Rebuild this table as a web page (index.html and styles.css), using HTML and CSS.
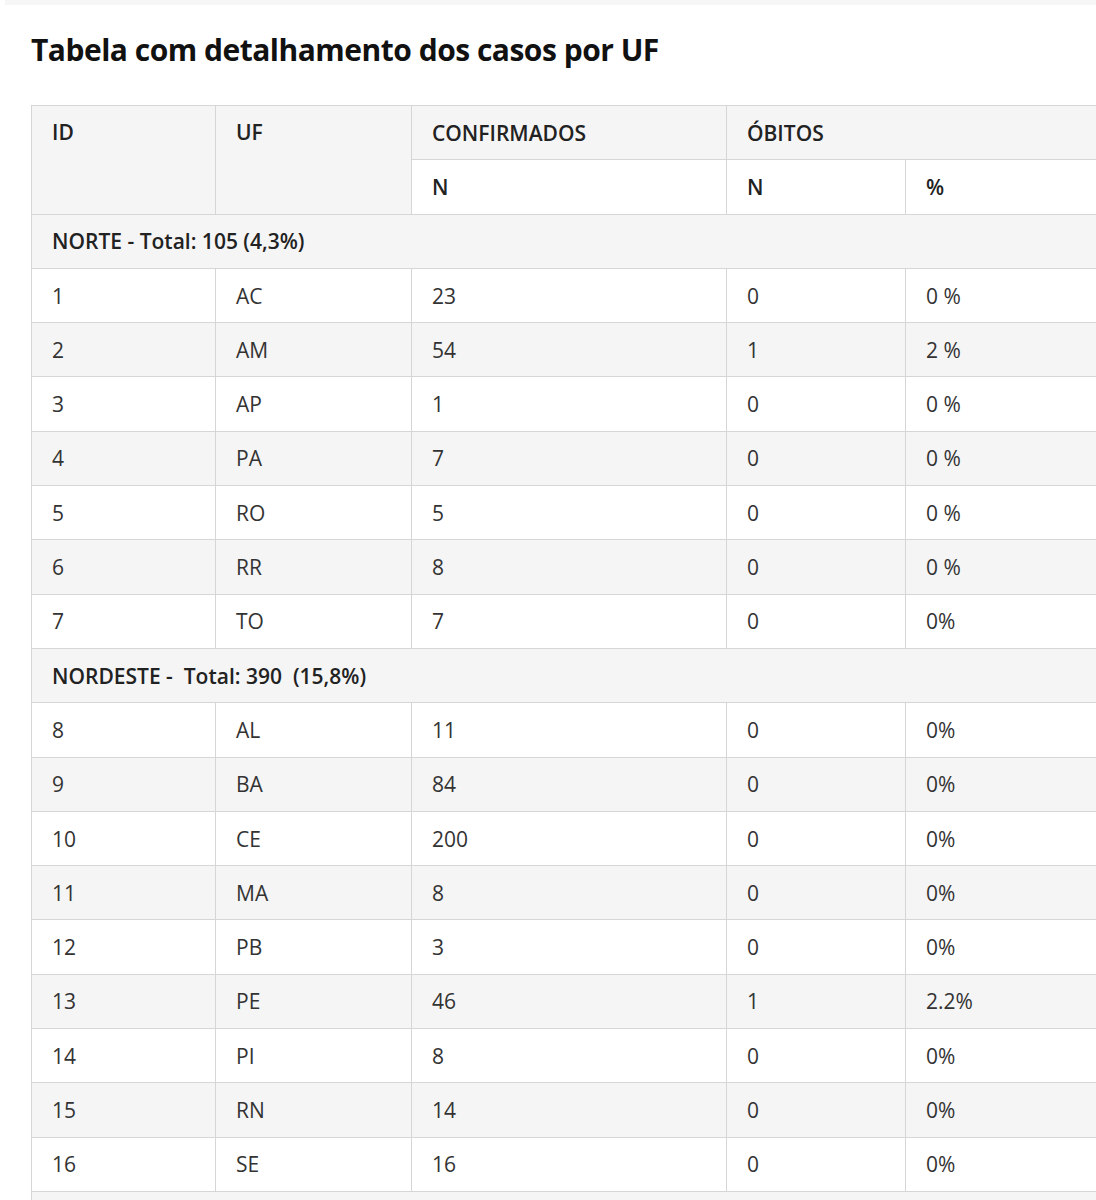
FILE: index.html
```html
<!DOCTYPE html>
<html lang="pt-BR">
<head>
<meta charset="utf-8">
<title>Tabela com detalhamento dos casos por UF</title>
<link rel="stylesheet" href="styles.css">
</head>
<body>
<div class="topbar"></div>
<main class="content">
  <h2 class="title">Tabela com detalhamento dos casos por UF</h2>
  <table class="cases">
    <colgroup>
      <col class="c-id"><col class="c-uf"><col class="c-conf"><col class="c-obn"><col class="c-obp">
    </colgroup>
    <thead>
      <tr class="h1">
        <th rowspan="2">ID</th>
        <th rowspan="2">UF</th>
        <th>CONFIRMADOS</th>
        <th colspan="2">ÓBITOS</th>
      </tr>
      <tr class="h2">
        <th>N</th>
        <th>N</th>
        <th>%</th>
      </tr>
    </thead>
    <tbody>
      <tr class="group"><td colspan="5">NORTE - Total: 105 (4,3%)</td></tr>
      <tr><td>1</td><td>AC</td><td>23</td><td>0</td><td>0 %</td></tr>
      <tr><td>2</td><td>AM</td><td>54</td><td>1</td><td>2 %</td></tr>
      <tr><td>3</td><td>AP</td><td>1</td><td>0</td><td>0 %</td></tr>
      <tr><td>4</td><td>PA</td><td>7</td><td>0</td><td>0 %</td></tr>
      <tr><td>5</td><td>RO</td><td>5</td><td>0</td><td>0 %</td></tr>
      <tr><td>6</td><td>RR</td><td>8</td><td>0</td><td>0 %</td></tr>
      <tr><td>7</td><td>TO</td><td>7</td><td>0</td><td>0%</td></tr>
      <tr class="group"><td colspan="5">NORDESTE -&nbsp; Total: 390&nbsp; (15,8%)</td></tr>
      <tr><td>8</td><td>AL</td><td>11</td><td>0</td><td>0%</td></tr>
      <tr><td>9</td><td>BA</td><td>84</td><td>0</td><td>0%</td></tr>
      <tr><td>10</td><td>CE</td><td>200</td><td>0</td><td>0%</td></tr>
      <tr><td>11</td><td>MA</td><td>8</td><td>0</td><td>0%</td></tr>
      <tr><td>12</td><td>PB</td><td>3</td><td>0</td><td>0%</td></tr>
      <tr><td>13</td><td>PE</td><td>46</td><td>1</td><td>2.2%</td></tr>
      <tr><td>14</td><td>PI</td><td>8</td><td>0</td><td>0%</td></tr>
      <tr><td>15</td><td>RN</td><td>14</td><td>0</td><td>0%</td></tr>
      <tr><td>16</td><td>SE</td><td>16</td><td>0</td><td>0%</td></tr>
      <tr class="group"><td colspan="5"></td></tr>
    </tbody>
  </table>
</main>
</body>
</html>
```

FILE: styles.css
```css
html, body {
  margin: 0;
  padding: 0;
  background: #fff;
  overflow: hidden;
}
body {
  font-family: "Open Sans", "Liberation Sans", sans-serif;
  color: #333;
}
.topbar {
  height: 5px;
  margin-left: 5px;
  background: #f6f6f6;
}
.content {
  padding: 0 0 0 31px;
}
.title {
  margin: 0;
  padding-top: 25px;
  height: 100px;
  box-sizing: border-box;
  font-size: 30px;
  line-height: 40px;
  font-weight: 700;
  color: #111;
  letter-spacing: -0.5px;
}
.cases {
  border-collapse: collapse;
  table-layout: fixed;
  width: 1100px;
  font-size: 21px;
}
.c-id { width: 184px; }
.c-uf { width: 196px; }
.c-conf { width: 315px; }
.c-obn { width: 179px; }
.c-obp { width: 226px; }
.cases th,
.cases td {
  border: 1px solid #d6d6d6;
  height: 54.3px;
  box-sizing: border-box;
  padding: 0 20px;
  text-align: left;
  vertical-align: middle;
}
.cases th {
  font-weight: 600;
  color: #222;
  background: #f5f5f5;
}
.cases thead th[rowspan] {
  vertical-align: top;
  padding-top: 12px;
}
.cases thead .h2 th {
  background: #fff;
}
.cases td {
  color: #333;
}
.cases tbody tr:nth-child(odd) td {
  background: #f5f5f5;
}
.cases tbody tr.group td {
  font-weight: 600;
  color: #222;
}
```
